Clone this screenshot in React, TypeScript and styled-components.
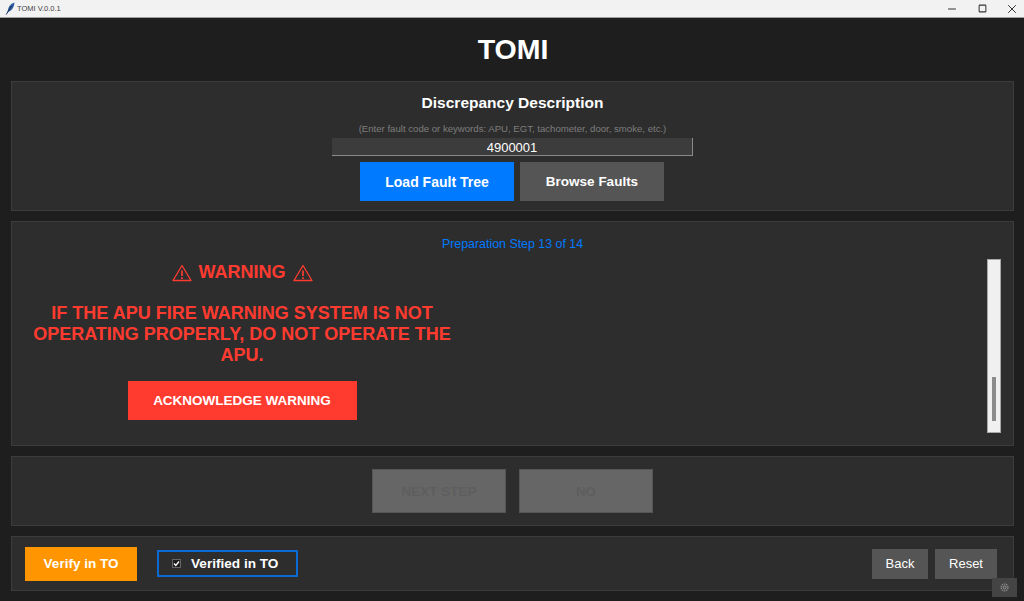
import { Minus, Square, X } from 'lucide-react'
import styled, { createGlobalStyle } from 'styled-components'

const GlobalStyle = createGlobalStyle`
  html, body {
    margin: 0;
    padding: 0;
    height: 100%;
    overflow: hidden;
    background: #1e1e1e;
    font-family: "Liberation Sans", Arial, sans-serif;
  }
  * { box-sizing: border-box; }
`

const Window = styled.div`
  width: 1024px;
  height: 601px;
  position: relative;
  display: flex;
  flex-direction: column;
  overflow: hidden;
`

const TitleBar = styled.div`
  height: 18px;
  flex: none;
  display: flex;
  align-items: center;
  padding-left: 5px;
  background: #f2f2f2;
  border-bottom: 1px solid #a0a0a0;
  color: #444;
  font-size: 7.5px;
`

const AppName = styled.span`
  margin-left: 1px;
  flex: 1;
`

const WindowControls = styled.div`
  display: flex;
  align-items: center;
  gap: 6px;
  color: #333;
`

const WindowControl = styled.span`
  width: 24px;
  display: flex;
  justify-content: center;
`

const Heading = styled.h1`
  height: 63px;
  flex: none;
  margin: 0;
  padding-left: 2px;
  display: flex;
  align-items: center;
  justify-content: center;
  color: #fff;
  font-size: 28.5px;
  font-weight: 700;
`

const Content = styled.div`
  display: flex;
  flex-direction: column;
  gap: 10px;
  padding: 0 10px 0 11px;
`

const Panel = styled.section<{ $height: number }>`
  height: ${({ $height }) => $height}px;
  flex: none;
  background: #2d2d2d;
  border: 1px solid #3c3c3c;
`

const SearchPanel = styled(Panel)`
  display: flex;
  flex-direction: column;
  align-items: center;
  padding-top: 12px;
`

const SectionTitle = styled.div`
  color: #fff;
  font-size: 15.5px;
  font-weight: 700;
  line-height: 17px;
`

const Hint = styled.div`
  margin-top: 12px;
  color: #7d7d7d;
  font-size: 9.6px;
  line-height: 12px;
`

const CodeInput = styled.input`
  width: 361px;
  height: 18px;
  margin-top: 3px;
  padding: 1px 0 0;
  background: #3c3c3c;
  border: none;
  border-right: 1px solid #8a8a8a;
  border-bottom: 1px solid #8a8a8a;
  color: #fff;
  font-family: inherit;
  font-size: 13px;
  text-align: center;
`

const SearchActions = styled.div`
  display: flex;
  gap: 6px;
  margin-top: 6px;
  padding-right: 1px;
`

const ActionButton = styled.button<{ $bg: string; $width: number; $height: number; $size?: number; $weight?: number }>`
  width: ${({ $width }) => $width}px;
  height: ${({ $height }) => $height}px;
  flex: none;
  padding: 0;
  border: none;
  background: ${({ $bg }) => $bg};
  color: #fff;
  font-family: inherit;
  font-size: ${({ $size }) => $size ?? 13.5}px;
  font-weight: ${({ $weight }) => $weight ?? 700};
`

const AcknowledgeButton = styled(ActionButton)`
  margin-top: 15px;
`

const StepPanel = styled(Panel)`
  display: flex;
  flex-direction: column;
  padding-top: 15px;
`

const StepLabel = styled.div`
  color: #007aff;
  font-size: 12.4px;
  line-height: 14px;
  text-align: center;
`

const StepBody = styled.div`
  flex: 1;
  display: flex;
  justify-content: space-between;
  padding-right: 12px;
`

const WarningColumn = styled.div`
  width: 460px;
  padding-top: 11px;
  display: flex;
  flex-direction: column;
  align-items: center;
  color: #ff3b30;
  font-weight: 700;
`

const WarningTitle = styled.div`
  display: flex;
  align-items: center;
  gap: 7px;
  height: 21px;
  font-size: 18px;
`

const WarningText = styled.p`
  width: 440px;
  margin: 20px 0 0;
  font-size: 18px;
  line-height: 21px;
  text-align: center;
`

const ScrollTrack = styled.div`
  width: 14px;
  height: 174px;
  margin-top: 8px;
  display: flex;
  justify-content: center;
  align-items: flex-end;
  padding-bottom: 11px;
  background: #f0f0f0;
  border: 1px solid #a8a8a8;
`

const ScrollThumb = styled.div`
  width: 4px;
  height: 44px;
  background: #8c8c8c;
`

const DecisionPanel = styled(Panel)`
  display: flex;
  justify-content: center;
  align-items: center;
  gap: 13px;
`

const DisabledButton = styled.button`
  width: 134px;
  height: 44px;
  padding: 0;
  background: #666;
  border: 1px solid #555;
  color: #5e5e5e;
  font-family: inherit;
  font-size: 13.5px;
  font-weight: 700;
`

const FooterPanel = styled(Panel)`
  display: flex;
  align-items: center;
  padding: 0 16px 0 13px;
`

const VerifiedBox = styled.label`
  width: 141px;
  height: 27px;
  margin-left: 20px;
  display: flex;
  align-items: center;
  gap: 10px;
  padding-left: 13px;
  border: 2px solid #0a6ad6;
  color: #fff;
  font-size: 13.6px;
  font-weight: 700;
`

const CheckMark = styled.span`
  width: 9px;
  height: 9px;
  display: flex;
  align-items: center;
  justify-content: center;
  background: #1e1e1e;
  border: 1px solid #666;
`

const FooterSpacer = styled.div`
  flex: 1;
`

const FooterActions = styled.div`
  display: flex;
  gap: 7px;
`

const SettingsButton = styled.button`
  position: absolute;
  right: 7px;
  bottom: 4px;
  width: 25px;
  height: 19px;
  padding: 0;
  display: flex;
  align-items: center;
  justify-content: center;
  background: #444;
  border: none;
`

const Feather = () => (
  <svg width="11" height="13" viewBox="0 0 11 13">
    <path d="M9.5 0.5C6 1.5 3.5 4 2.8 8.5L2.3 10.2L4.2 9.4C7.5 8 9.2 4.5 9.5 0.5Z" fill="#2f5a9e" />
    <path d="M6.5 4L1.2 12.5" stroke="#17305c" strokeWidth="1" fill="none" />
  </svg>
)

const WarningIcon = () => (
  <svg width="20" height="18" viewBox="0 0 20 18" fill="none" stroke="#ff3b30">
    <path d="M10 1.5L19 16.5H1Z" strokeWidth="1.3" strokeLinejoin="round" />
    <path d="M10 6.5V12" strokeWidth="1.7" />
    <path d="M10 13.2V15" strokeWidth="1.7" />
  </svg>
)

const GearIcon = () => (
  <svg width="9" height="9" viewBox="0 0 10 10" fill="none" stroke="#8a8a8a">
    <circle cx="5" cy="5" r="1.6" strokeWidth="1.2" />
    <circle cx="5" cy="5" r="3.8" strokeWidth="1.4" strokeDasharray="1.6 0.8" />
  </svg>
)

const App = () => {
  return (
    <>
      <GlobalStyle />
      <Window>
        <TitleBar>
          <Feather />
          <AppName>TOMI V.0.0.1</AppName>
          <WindowControls>
            <WindowControl>
              <Minus size={12} strokeWidth={2} />
            </WindowControl>
            <WindowControl>
              <Square size={9} strokeWidth={2.67} />
            </WindowControl>
            <WindowControl>
              <X size={14} strokeWidth={1.7} />
            </WindowControl>
          </WindowControls>
        </TitleBar>
        <Heading>TOMI</Heading>
        <Content>
          <SearchPanel $height={130}>
            <SectionTitle>Discrepancy Description</SectionTitle>
            <Hint>(Enter fault code or keywords: APU, EGT, tachometer, door, smoke, etc.)</Hint>
            <CodeInput defaultValue="4900001" />
            <SearchActions>
              <ActionButton $bg="#007aff" $width={154} $height={39} $size={14}>
                Load Fault Tree
              </ActionButton>
              <ActionButton $bg="#555555" $width={144} $height={39} $size={13.5}>
                Browse Faults
              </ActionButton>
            </SearchActions>
          </SearchPanel>
          <StepPanel $height={225}>
            <StepLabel>Preparation Step 13 of 14</StepLabel>
            <StepBody>
              <WarningColumn>
                <WarningTitle>
                  <WarningIcon />
                  <span>WARNING</span>
                  <WarningIcon />
                </WarningTitle>
                <WarningText>
                  IF THE APU FIRE WARNING SYSTEM IS NOT OPERATING PROPERLY, DO NOT OPERATE THE APU.
                </WarningText>
                <AcknowledgeButton $bg="#ff3b30" $width={229} $height={39}>
                  ACKNOWLEDGE WARNING
                </AcknowledgeButton>
              </WarningColumn>
              <ScrollTrack>
                <ScrollThumb />
              </ScrollTrack>
            </StepBody>
          </StepPanel>
          <DecisionPanel $height={70}>
            <DisabledButton disabled>NEXT STEP</DisabledButton>
            <DisabledButton disabled>NO</DisabledButton>
          </DecisionPanel>
          <FooterPanel $height={55}>
            <ActionButton $bg="#ff9500" $width={112} $height={34}>
              Verify in TO
            </ActionButton>
            <VerifiedBox>
              <CheckMark>
                <svg width="7" height="7" viewBox="0 0 7 7" fill="none" stroke="#fff" strokeWidth="1.3">
                  <path d="M1 3.5L2.8 5.5L6 1.5" />
                </svg>
              </CheckMark>
              Verified in TO
            </VerifiedBox>
            <FooterSpacer />
            <FooterActions>
              <ActionButton $bg="#555555" $width={56} $height={30} $size={13} $weight={400}>
                Back
              </ActionButton>
              <ActionButton $bg="#555555" $width={62} $height={30} $size={13} $weight={400}>
                Reset
              </ActionButton>
            </FooterActions>
          </FooterPanel>
        </Content>
        <SettingsButton>
          <GearIcon />
        </SettingsButton>
      </Window>
    </>
  )
}

export default App
